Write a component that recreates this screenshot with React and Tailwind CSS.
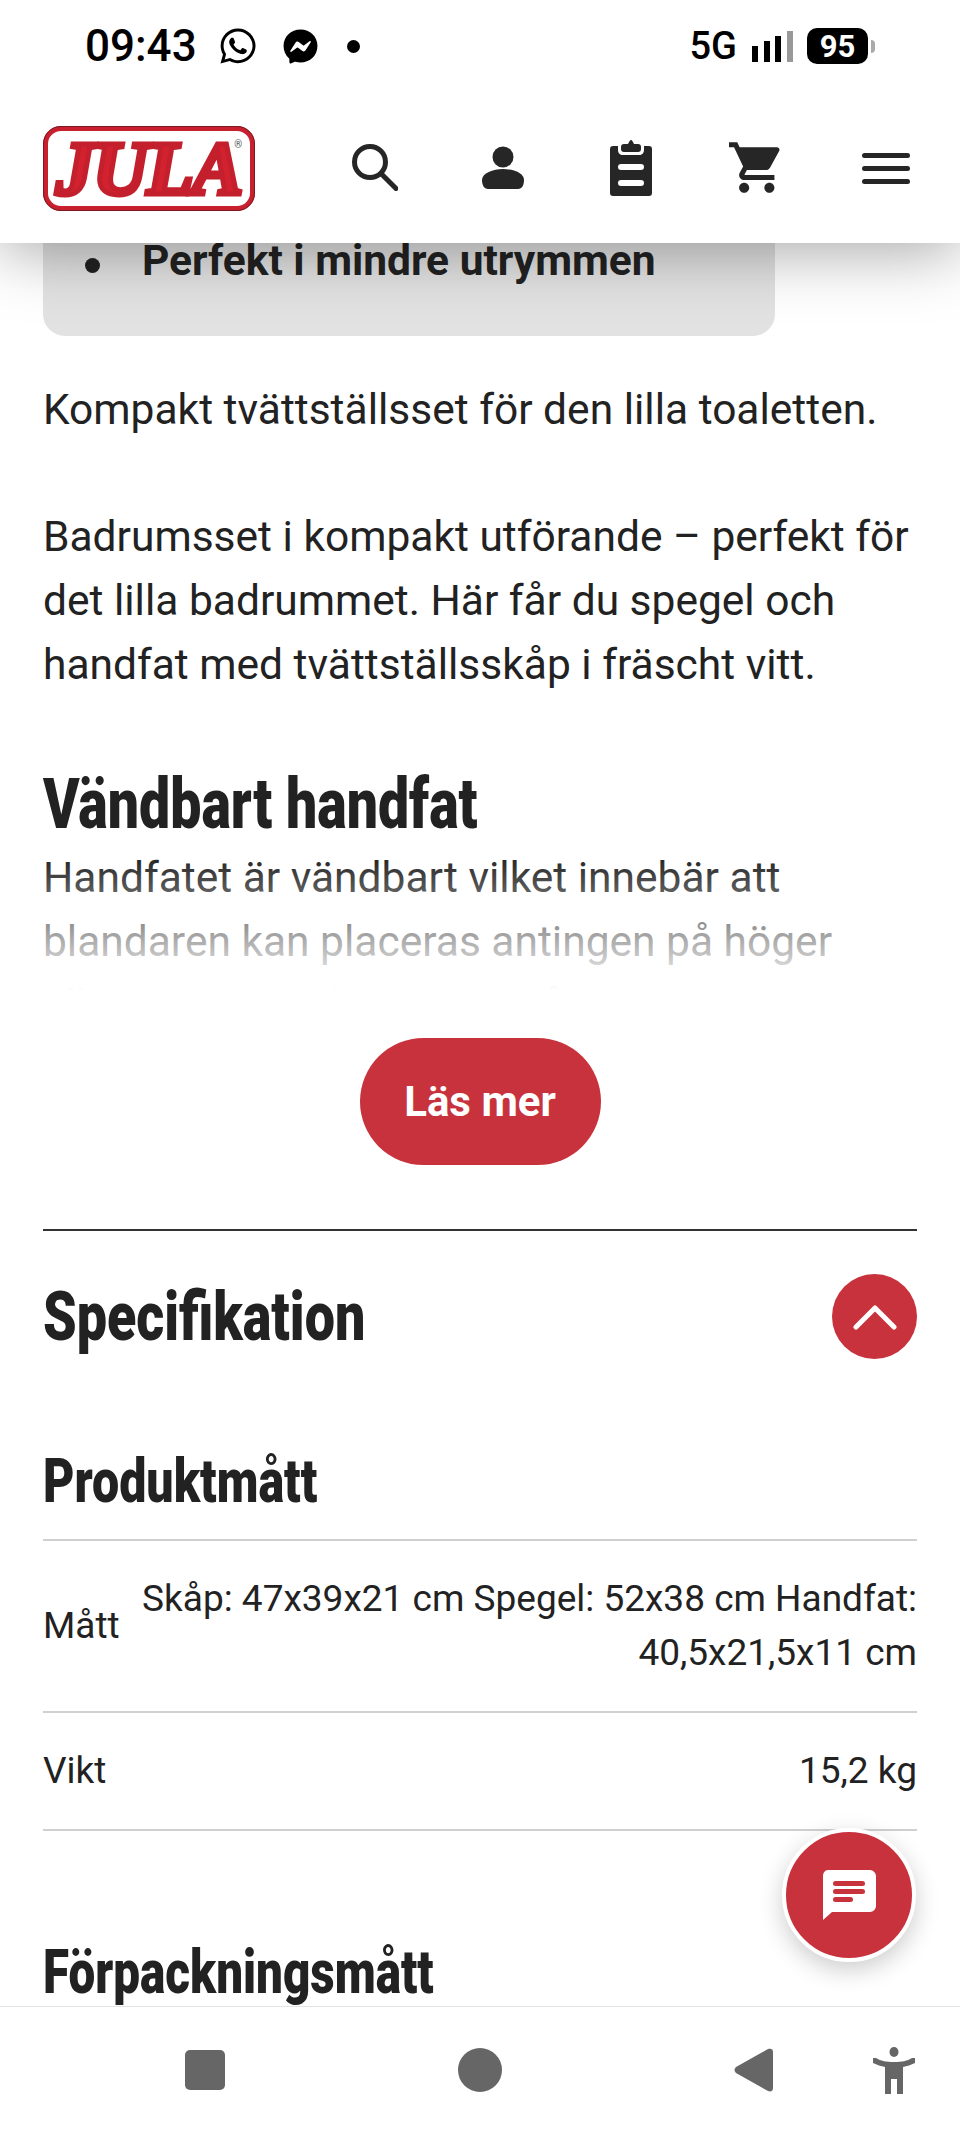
import { FaWhatsapp, FaFacebookMessenger } from 'react-icons/fa'

const sans = "font-['Roboto','Liberation_Sans',sans-serif]"

const StatusBar = () => (
  <div className="flex h-[92px] items-center justify-between pl-[85px] pr-[85px] bg-white text-black">
    <div className="flex items-center">
      <span className="text-[44px] font-medium leading-none">09:43</span>
      <FaWhatsapp className="ml-[21px] h-[40px] w-[40px]" />
      <FaFacebookMessenger className="ml-[25px] h-[35px] w-[35px]" />
      <span className="ml-[29px] h-[13px] w-[13px] rounded-full bg-black" />
    </div>
    <div className="flex items-center">
      <span className="text-[38px] font-medium leading-none">5G</span>
      <svg viewBox="0 0 41 31" className="ml-[15px] h-[31px] w-[41px]">
        <rect x="0" y="15" width="6" height="16" fill="#000" />
        <rect x="12" y="10" width="6" height="21" fill="#000" />
        <rect x="23" y="5" width="6" height="26" fill="#000" />
        <rect x="35" y="0" width="6" height="31" fill="#999" />
      </svg>
      <span className="ml-[14px] flex h-[36px] w-[61px] items-center justify-center rounded-[10px] bg-black text-[31px] font-bold leading-none text-white">95</span>
      <span className="ml-[3px] h-[13px] w-[4px] rounded-r-sm bg-[#aaa]" />
    </div>
  </div>
)

const Logo = () => (
  <div className="relative mt-[1px] flex h-[85px] w-[212px] shrink-0 items-center justify-center rounded-[18px] border-[5px] border-[#c8202f] bg-white outline-1 outline-[#7a1a20] [outline-offset:-1px]">
    <span className="font-['Liberation_Serif',serif] text-[76px] font-bold italic leading-none tracking-[-1px] text-[#d3222f] [-webkit-text-stroke:5px_#c41f2d]">JULA</span>
    <span className="absolute right-[8px] top-[9px] text-[10px] leading-none text-[#555]">®</span>
  </div>
)

const Header = () => (
  <header className="flex h-[151px] items-center bg-white pl-[43px]">
    <Logo />
    <div className="flex items-center">
      <svg viewBox="0 0 46 47" className="ml-[97px] h-[47px] w-[46px]" fill="none" stroke="#262626" strokeWidth="5" strokeLinecap="round">
        <circle cx="18" cy="18" r="15.5" />
        <path d="M29 29.5L44 44.5" />
      </svg>
      <svg viewBox="0 0 42 43" className="ml-[84px] h-[43px] w-[42px]" fill="#262626">
        <circle cx="21" cy="11" r="10.5" />
        <path d="M0 34c0-7 11-11 21-11s21 4 21 11c0 5-2 9-6 9H6c-4 0-6-4-6-9z" />
      </svg>
      <svg viewBox="0 0 42 56" className="ml-[86px] h-[56px] w-[42px]" fill="#262626">
        <path fillRule="evenodd" d="M3 6h5v4c0 3 2 5 5 5h16c3 0 5-2 5-5V6h5c2 0 3 1 3 3v44c0 2-1 3-3 3H3c-2 0-3-1-3-3V9c0-2 1-3 3-3zM11 24a2.5 2.5 0 000 6h20a2.5 2.5 0 000-6zM11 40a2.5 2.5 0 000 6h20a2.5 2.5 0 000-6z" />
        <path d="M14 4h4c1-2 2-4 3-4s2 2 3 4h4c2 0 3 1 3 3v2c0 2-1 3-3 3H14c-2 0-3-1-3-3V7c0-2 1-3 3-3z" />
      </svg>
      <svg viewBox="1 2 21 20" className="ml-[77px] h-[53px] w-[53px]" fill="#262626">
        <path d="M7 18c-1.1 0-1.99.9-1.99 2S5.9 22 7 22s2-.9 2-2-.9-2-2-2zM1 2v2h2l3.6 7.59-1.35 2.45c-.16.28-.25.61-.25.96 0 1.1.9 2 2 2h12v-2H7.42c-.14 0-.25-.11-.25-.25l.03-.12.9-1.63h7.45c.75 0 1.41-.41 1.75-1.03l3.58-6.49c.08-.14.12-.31.12-.48 0-.55-.45-1-1-1H5.21l-.94-2H1zm16 16c-1.1 0-1.99.9-1.99 2s.89 2 1.99 2 2-.9 2-2-.9-2-2-2z" />
      </svg>
      <div className="ml-[80px] mt-[2px] flex w-[48px] flex-col gap-[8px]">
        <span className="h-[5px] rounded-full bg-[#262626]" />
        <span className="h-[5px] rounded-full bg-[#262626]" />
        <span className="h-[5px] rounded-full bg-[#262626]" />
      </div>
    </div>
  </header>
)

const Heading = ({ size, children }) => (
  <h2 className={`${size} origin-left scale-x-[0.78] whitespace-nowrap font-black text-[#222]`}>{children}</h2>
)

const SpecRow = ({ label, children, className }) => (
  <div className={`flex items-center justify-between gap-5 border-b-2 border-[#d0d0d0] text-[37px] leading-[54px] text-[#222] ${className}`}>
    <span>{label}</span>
    <span className="text-right">{children}</span>
  </div>
)

export default function App() {
  return (
    <div className={`relative flex h-[2133px] w-[960px] flex-col overflow-hidden bg-white ${sans}`}>
      <div className="relative z-10 shadow-[0_8px_60px_rgba(0,0,0,0.35)]">
        <StatusBar />
        <Header />
      </div>

      <main className="flex-1 overflow-hidden px-[43px]">
        <div className="relative h-[93px] w-[732px] rounded-b-[22px] bg-[#e2e2e2] pl-[99px]">
          <span className="absolute left-[42px] top-[15px] h-[15px] w-[15px] rounded-full bg-[#222]" />
          <p className="text-[42.5px] font-bold leading-[36px] text-[#222]">Perfekt i mindre utrymmen</p>
        </div>

        <div className="relative mt-[42px] h-[613px] overflow-hidden text-[42.5px] leading-[64px] text-[#222]">
          <p>Kompakt tvättställsset för den lilla toaletten.</p>
          <p className="mt-[63px]">Badrumsset i kompakt utförande – perfekt för det lilla badrummet. Här får du spegel och handfat med tvättställsskåp i fräscht vitt.</p>
          <Heading size="text-[71px] leading-[70px] mt-[72px]">Vändbart handfat</Heading>
          <p className="mt-[7px]">Handfatet är vändbart vilket innebär att blandaren kan placeras antingen på höger eller vänster sida. Djupet på 1,27</p>
          <div className="absolute inset-x-0 bottom-0 h-[135px] bg-gradient-to-b from-white/0 to-white" />
        </div>

        <div className="mt-[47px] flex justify-center">
          <button className="h-[127px] w-[241px] rounded-full bg-[#c8323c] text-[42px] font-bold text-white">Läs mer</button>
        </div>

        <div className="mt-[64px] border-t-2 border-[#333]">
          <div className="mt-[43px] flex h-[85px] items-center justify-between">
            <Heading size="text-[69px] leading-none">Specifikation</Heading>
            <span className="flex h-[85px] w-[85px] items-center justify-center rounded-full bg-[#c8323c]">
              <svg viewBox="0 0 44 26" className="h-[26px] w-[44px]" fill="none" stroke="#fff" strokeWidth="5" strokeLinecap="round" strokeLinejoin="round">
                <path d="M3 23L22 4l19 19" />
              </svg>
            </span>
          </div>
          <div className="mt-[92px] border-b-2 border-[#d0d0d0] pb-[28px]">
            <Heading size="text-[62px] leading-[60px]">Produktmått</Heading>
          </div>
          <SpecRow label="Mått" className="h-[172px]">Skåp: 47x39x21 cm Spegel: 52x38 cm Handfat: 40,5x21,5x11 cm</SpecRow>
          <SpecRow label="Vikt" className="h-[118px]">15,2 kg</SpecRow>
          <div className="mt-[111px]">
            <Heading size="text-[61px] leading-[60px]">Förpackningsmått</Heading>
          </div>
        </div>
      </main>

      <nav className="relative z-10 flex h-[127px] items-center border-t border-[#e4e4e4] bg-white">
        <span className="ml-[185px] h-[40px] w-[40px] rounded-[5px] bg-[#666]" />
        <span className="ml-[233px] h-[44px] w-[44px] rounded-full bg-[#666]" />
        <svg viewBox="0 0 40 44" className="ml-[232px] h-[44px] w-[40px]" fill="#666">
          <path d="M2 19L34 1c3-1 5 0 5 3v36c0 3-2 4-5 3L2 25c-2-2-2-4 0-6z" />
        </svg>
        <svg viewBox="0 0 42 47" className="ml-[99px] h-[47px] w-[42px]" fill="#666">
          <ellipse cx="21" cy="5" rx="4.5" ry="5" />
          <path d="M0 11h3c5 3 10 4 18 4s13-1 18-4h3v5c-4 2-8 3-12 4v27h-6V32h-6v15h-6V20c-4-1-8-2-12-4z" />
        </svg>
      </nav>

      <button className="absolute left-[782px] top-[1828px] z-20 flex h-[134px] w-[134px] items-center justify-center rounded-full border-[4px] border-white bg-[#c8323c] shadow-[0_8px_24px_rgba(0,0,0,0.2)]">
        <svg viewBox="0 0 54 50" className="h-[50px] w-[54px]">
          <path d="M6 0h42c3 0 6 3 6 6v30c0 3-3 6-6 6H10L1 50V6c0-3 2-6 5-6z" fill="#fff" />
          <rect x="11" y="11" width="32" height="5" rx="2.5" fill="#c8323c" />
          <rect x="11" y="19" width="32" height="5" rx="2.5" fill="#c8323c" />
          <rect x="11" y="27" width="20" height="5" rx="2.5" fill="#c8323c" />
        </svg>
      </button>
    </div>
  )
}
